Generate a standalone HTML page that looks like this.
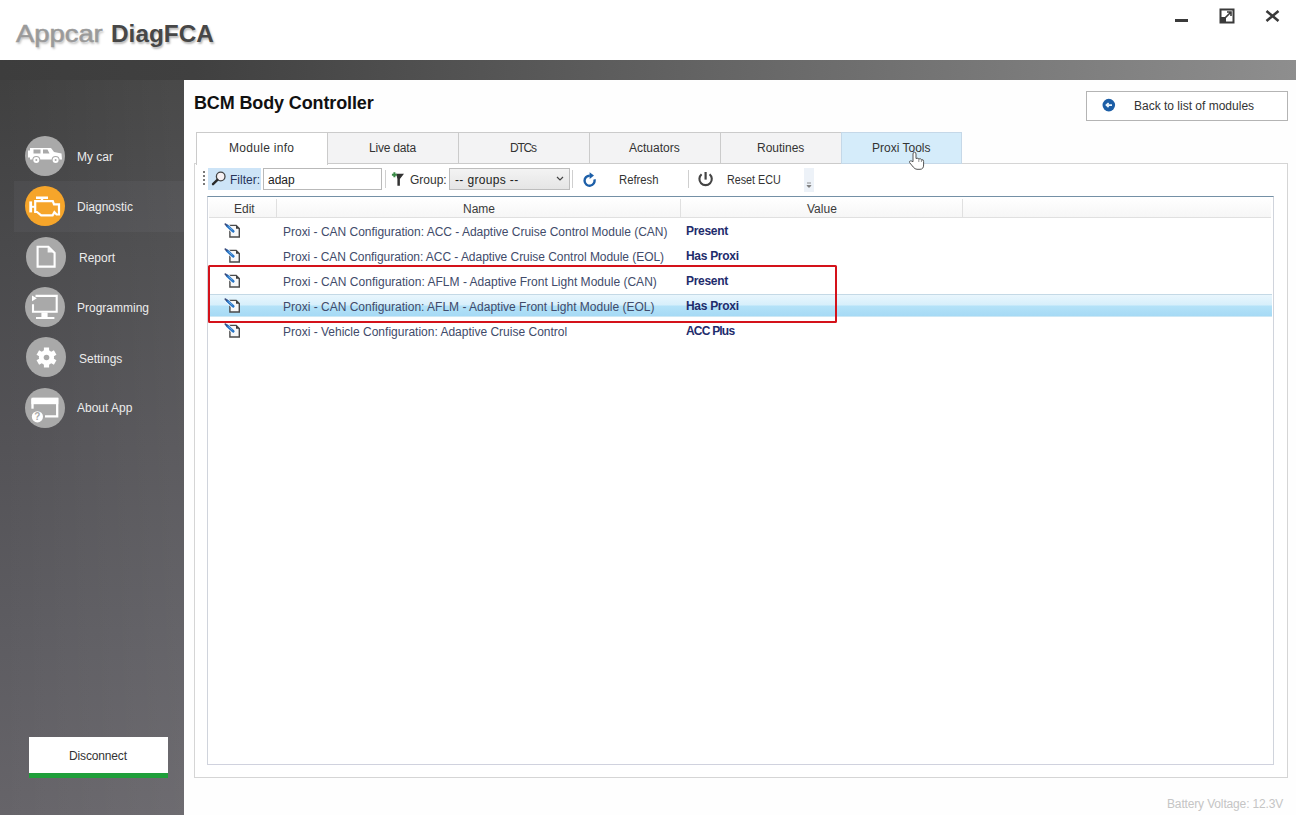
<!DOCTYPE html>
<html><head><meta charset="utf-8"><style>
*{margin:0;padding:0;box-sizing:border-box}
html,body{width:1296px;height:815px;overflow:hidden;background:#fff;font-family:"Liberation Sans",sans-serif}
.a{position:absolute}
.t{position:absolute;white-space:nowrap}
</style></head><body>
<div class="t" style="left:16px;top:20px;font-size:23px;line-height:28px;color:#9a9a9a;-webkit-text-stroke:0.5px #9a9a9a;transform:scaleX(1.19);transform-origin:0 0;text-shadow:1px 2px 2px rgba(0,0,0,.25)">Appcar</div>
<div class="t" style="left:111px;top:20px;font-size:23px;line-height:28px;font-weight:bold;color:#474747;transform:scaleX(1.06);transform-origin:0 0;text-shadow:1px 2px 2px rgba(0,0,0,.28)">DiagFCA</div>
<div class="a" style="left:1175px;top:19px;width:13px;height:3px;background:#3a3a3a"></div>
<svg class="a" style="left:1219px;top:8px" width="16" height="16" viewBox="0 0 16 16">
<rect x="1.5" y="1.5" width="13" height="13" fill="none" stroke="#3a3a3a" stroke-width="2"/>
<rect x="1" y="9" width="6" height="6" fill="#3a3a3a"/>
<path d="M6 10 L12 4 M8 4 H12 V8" fill="none" stroke="#3a3a3a" stroke-width="1.6"/></svg>
<svg class="a" style="left:1265px;top:10px" width="15" height="12" viewBox="0 0 15 12">
<path d="M1.5 1 L13.5 11 M13.5 1 L1.5 11" stroke="#3a3a3a" stroke-width="2.6"/></svg>
<div class="a" style="left:0;top:60px;width:1296px;height:20px;background:linear-gradient(90deg,#3d3d3d 0%,#404040 15%,#5c5c5c 46%,#8e8e8e 100%)"></div>
<div class="a" style="left:0;top:80px;width:184px;height:735px;background:linear-gradient(90deg,rgba(255,255,255,0) 0%,rgba(255,255,255,0.05) 100%),linear-gradient(180deg,#404040 0%,#49494b 22%,#545357 50%,#5d5c61 75%,#666469 100%)"></div>
<div class="a" style="left:184px;top:80px;width:1112px;height:735px;background:#fefefe"></div>
<div class="a" style="left:14px;top:181px;width:170px;height:51px;background:rgba(235,230,255,0.045)"></div>
<svg class="a" style="left:24px;top:135px" width="42" height="42" viewBox="0 0 42 42"><circle cx="21" cy="21" r="20" fill="#a9a9a9"/><path d="M6 13 H27 L30 17 L37.5 18.5 L38 24.5 H6 Z" fill="#fff"/>
<rect x="4" y="15.5" width="2.2" height="7" fill="#fff"/>
<path d="M9.5 14.5 H16.5 V18.5 H9.5 Z M19 14.5 H23.5 L25.5 18.5 H19 Z" fill="#a9a9a9"/>
<circle cx="12.3" cy="25" r="4" fill="#a9a9a9"/><circle cx="31.6" cy="25" r="4" fill="#a9a9a9"/>
<circle cx="12.3" cy="25" r="3" fill="#fff"/><circle cx="31.6" cy="25" r="3" fill="#fff"/>
<circle cx="12.3" cy="25" r="1" fill="#a9a9a9"/><circle cx="31.6" cy="25" r="1" fill="#a9a9a9"/></svg>
<div class="t" style="left:77px;top:150px;font-size:12px;line-height:14px;color:#ececec">My car</div>
<svg class="a" style="left:24px;top:185px" width="42" height="42" viewBox="0 0 42 42"><circle cx="21" cy="21" r="20" fill="#f6a52a"/><path d="M12 12.8 H24 M18 13 V16" fill="none" stroke="#fff" stroke-width="2.4"/>
<path d="M11.2 16.2 H28.8 L30 19.3 H35 V29.5 H32.6 L30.4 27.2 L28.6 30.4 H17.2 L13 27 H11.2 Z" fill="none" stroke="#fff" stroke-width="2.2" stroke-linejoin="miter"/>
<path d="M6.7 16.4 V27.4" stroke="#fff" stroke-width="2.8"/><path d="M7 21.8 H11" stroke="#fff" stroke-width="2"/></svg>
<div class="t" style="left:77px;top:200px;font-size:12px;line-height:14px;color:#ececec">Diagnostic</div>
<svg class="a" style="left:25px;top:236px" width="42" height="42" viewBox="0 0 42 42"><circle cx="21" cy="21" r="20" fill="#a9a9a9"/><path d="M12.6 10.8 H23.4 L29.6 17 V30.6 H12.6 Z" fill="none" stroke="#fff" stroke-width="2.1" stroke-linejoin="miter"/>
<path d="M22.6 11 L28.6 16.6 H22.6 Z" fill="#fff" opacity="0.9"/></svg>
<div class="t" style="left:79px;top:251px;font-size:12px;line-height:14px;color:#ececec">Report</div>
<svg class="a" style="left:24px;top:286px" width="42" height="42" viewBox="0 0 42 42"><circle cx="21" cy="21" r="20" fill="#a9a9a9"/><path d="M11.5 9.9 H32.7 V25.7 H9 V18.2" fill="none" stroke="#fff" stroke-width="2.1"/>
<path d="M8 9.4 L12.8 12.3 L8 15.2 Z" fill="#fff"/>
<rect x="17.4" y="26.5" width="6.2" height="4.6" fill="#fff"/><rect x="12" y="31" width="18.4" height="2" fill="#fff"/></svg>
<div class="t" style="left:77px;top:301px;font-size:12px;line-height:14px;color:#ececec">Programming</div>
<svg class="a" style="left:25px;top:336px" width="42" height="42" viewBox="0 0 42 42"><circle cx="21" cy="21" r="20" fill="#a9a9a9"/><g fill="#fff" transform="translate(21.5 21.5)"><circle r="7.6"/>
<rect x="-2.6" y="-10" width="5.2" height="20"/>
<rect x="-2.6" y="-10" width="5.2" height="20" transform="rotate(60)"/><rect x="-2.6" y="-10" width="5.2" height="20" transform="rotate(-60)"/>
</g><circle cx="21.5" cy="21.5" r="2.8" fill="#a9a9a9"/></svg>
<div class="t" style="left:79px;top:352px;font-size:12px;line-height:14px;color:#ececec">Settings</div>
<svg class="a" style="left:24px;top:387px" width="42" height="42" viewBox="0 0 42 42"><circle cx="21" cy="21" r="20" fill="#a9a9a9"/><path d="M8.5 12 H33.2 V29.3 H21" fill="none" stroke="#fff" stroke-width="2.3"/>
<rect x="7.4" y="10.8" width="26.9" height="6.4" fill="#fff"/>
<path d="M8.5 12 V21.7" stroke="#fff" stroke-width="2.3"/>
<circle cx="13.4" cy="29.8" r="5.6" fill="#fff"/>
<text x="13.4" y="33.4" font-size="10" font-weight="bold" text-anchor="middle" fill="#a9a9a9" font-family="Liberation Sans">?</text></svg>
<div class="t" style="left:77px;top:401px;font-size:12px;line-height:14px;color:#ececec">About App</div>
<div class="a" style="left:29px;top:737px;width:139px;height:37px;background:#fff"></div>
<div class="a" style="left:29px;top:773px;width:139px;height:5px;background:#1f9e3a"></div>
<div class="t" style="left:69px;top:749px;font-size:12px;line-height:14px;color:#333;letter-spacing:-0.15px">Disconnect</div>
<div class="t" style="left:194px;top:93px;font-size:18px;line-height:20px;color:#111;font-weight:700;letter-spacing:-0.13px">BCM Body Controller</div>
<div class="a" style="left:1086px;top:91px;width:202px;height:30px;border:1px solid #b4b4b4;background:#fff"></div>
<svg class="a" style="left:1102px;top:98px" width="14" height="14" viewBox="0 0 14 14"><circle cx="6.8" cy="7.1" r="6.3" fill="#1c5ea6"/><path d="M10 7.1 H4.6 M6.6 5 L4.4 7.1 L6.6 9.2" fill="none" stroke="#eaf4fc" stroke-width="1.7"/></svg>
<div class="t" style="left:1134px;top:99px;font-size:12px;line-height:14px;color:#333">Back to list of modules</div>
<div class="a" style="left:194px;top:163px;width:1094px;height:615px;border:1px solid #d5d5d5;background:#fff"></div>
<div class="a" style="left:196px;top:132px;width:132px;height:33px;border:1px solid #cbcbcb;border-bottom:none;background:#fff"></div>
<div class="t" style="left:229px;top:141px;font-size:12px;line-height:14px;color:#333;letter-spacing:0.3px">Module info</div>
<div class="a" style="left:327px;top:132px;width:132px;height:32px;border:1px solid #cbcbcb;background:#f3f3f4"></div>
<div class="t" style="left:369px;top:141px;font-size:12px;line-height:14px;color:#333;letter-spacing:-0.2px">Live data</div>
<div class="a" style="left:458px;top:132px;width:132px;height:32px;border:1px solid #cbcbcb;background:#f3f3f4"></div>
<div class="t" style="left:510px;top:141px;font-size:12px;line-height:14px;color:#333;letter-spacing:-1.2px">DTCs</div>
<div class="a" style="left:589px;top:132px;width:132px;height:32px;border:1px solid #cbcbcb;background:#f3f3f4"></div>
<div class="t" style="left:629px;top:141px;font-size:12px;line-height:14px;color:#333">Actuators</div>
<div class="a" style="left:720px;top:132px;width:122px;height:32px;border:1px solid #cbcbcb;background:#f3f3f4"></div>
<div class="t" style="left:757px;top:141px;font-size:12px;line-height:14px;color:#333">Routines</div>
<div class="a" style="left:841px;top:132px;width:121px;height:32px;border:1px solid #c5d8e8;background:#d5ecfa"></div>
<div class="t" style="left:872px;top:141px;font-size:12px;line-height:14px;color:#333">Proxi Tools</div>
<svg class="a" style="left:203px;top:171px" width="3" height="16"><g fill="#7a7a7a"><rect x="0" y="0" width="2" height="2"/><rect x="0" y="4" width="2" height="2"/><rect x="0" y="8" width="2" height="2"/><rect x="0" y="12" width="2" height="2"/></g></svg>
<div class="a" style="left:208px;top:168px;width:53px;height:22px;background:#cde4f7"></div>
<svg class="a" style="left:211px;top:171px" width="16" height="16" viewBox="0 0 16 16"><circle cx="9.7" cy="5.5" r="4.3" fill="#f7f1f3" stroke="#444" stroke-width="1.3"/><path d="M6.4 8.8 L2 13.2" stroke="#2a2a2a" stroke-width="2.4" stroke-linecap="round"/></svg>
<div class="t" style="left:230px;top:173px;font-size:12px;line-height:14px;color:#27345a">Filter:</div>
<div class="a" style="left:263px;top:168px;width:119px;height:22px;border:1px solid #b9b9b9;background:#fff"></div>
<div class="t" style="left:268px;top:173px;font-size:12px;line-height:14px;color:#222">adap</div>
<div class="a" style="left:385px;top:170px;width:1px;height:18px;background:#cfcfcf"></div>
<svg class="a" style="left:390px;top:171px" width="16" height="16" viewBox="0 0 16 16"><path d="M6.2 2.8 H14 L9.9 8 V14.8 H7.4 V8 Z" fill="#333"/><path d="M4.4 1.3 V6.3 M1.9 3.8 H6.9" stroke="#3a8a46" stroke-width="2"/></svg>
<div class="t" style="left:410px;top:173px;font-size:12px;line-height:14px;color:#333">Group:</div>
<div class="a" style="left:449px;top:168px;width:121px;height:22px;border:1px solid #bdbdbd;background:linear-gradient(#f3f3f3,#e5e5e5)"></div>
<div class="t" style="left:455px;top:173px;font-size:12px;line-height:14px;color:#222;letter-spacing:0.35px">-- groups --</div>
<svg class="a" style="left:556px;top:176px" width="8" height="6"><path d="M1 1 L4 4 L7 1" fill="none" stroke="#444" stroke-width="1.2"/></svg>
<div class="a" style="left:572px;top:170px;width:1px;height:18px;background:#cfcfcf"></div>
<svg class="a" style="left:582px;top:171px" width="16" height="16" viewBox="0 0 16 16"><path d="M12.4 8.4 A5 5 0 1 1 7.8 4.7" fill="none" stroke="#1d5fa8" stroke-width="2.4"/><path d="M7.6 1.2 L12 4.6 L7.6 8 Z" fill="#1d5fa8"/></svg>
<div class="t" style="left:619px;top:173px;font-size:12px;line-height:14px;color:#333;transform:scaleX(0.94);transform-origin:0 0">Refresh</div>
<div class="a" style="left:688px;top:170px;width:1px;height:18px;background:#cfcfcf"></div>
<svg class="a" style="left:698px;top:171px" width="16" height="16" viewBox="0 0 16 16"><path d="M3.6 3.2 A6.2 6.2 0 1 0 11.6 3.2" fill="none" stroke="#444" stroke-width="2.1"/><path d="M7.6 1 V8.6" stroke="#444" stroke-width="2.2"/></svg>
<div class="t" style="left:727px;top:173px;font-size:12px;line-height:14px;color:#333;transform:scaleX(0.895);transform-origin:0 0">Reset ECU</div>
<div class="a" style="left:804px;top:168px;width:10px;height:24px;background:#edf2f8"></div>
<svg class="a" style="left:805px;top:181px" width="8" height="8"><path d="M2 2 H6 M2 4.5 L4 6.5 L6 4.5 Z" fill="#777" stroke="#777" stroke-width="0.8"/></svg>
<div class="a" style="left:207px;top:196px;width:1067px;height:569px;border:1px solid #9fb6ca;border-color:#7490a6 #d0d4dc #d0d2de #d0d4dc;background:#fff"></div>
<div class="a" style="left:209px;top:198px;width:1062px;height:19px;background:linear-gradient(#fff,#f6f6f6)"></div>
<div class="a" style="left:209px;top:217px;width:1062px;height:1px;background:#e0e0e0"></div>
<div class="a" style="left:276px;top:199px;width:1px;height:18px;background:#e0e0e0"></div>
<div class="a" style="left:680px;top:199px;width:1px;height:18px;background:#e0e0e0"></div>
<div class="a" style="left:962px;top:199px;width:1px;height:18px;background:#e0e0e0"></div>
<div class="t" style="left:234px;top:202px;font-size:12px;line-height:14px;color:#3a3a3a">Edit</div>
<div class="t" style="left:463px;top:202px;font-size:12px;line-height:14px;color:#3a3a3a">Name</div>
<div class="t" style="left:807px;top:202px;font-size:12px;line-height:14px;color:#3a3a3a">Value</div>
<div class="a" style="left:209px;top:294px;width:1063px;height:23px;background:linear-gradient(180deg,#c4d9e6 0px,#c4d9e6 1px,#e9f6fd 1px,#d7effb 11px,#b4e2f8 12px,#a6daf5 22px,#cde8f5 22px)"></div>
<svg class="a" style="left:223px;top:223px" width="18" height="16" viewBox="0 0 18 16"><path d="M6.9 2.4 H13.2 L16.3 5.5 V14 H6.9 Z" fill="#f7f7f7" stroke="#4a4a4a" stroke-width="1.4"/><path d="M13 2.4 L16.3 5.7 H13 Z" fill="#3a3a3a"/><path d="M4.4 3 L10.4 8.4" stroke="#fff" stroke-width="4.2" stroke-linecap="round"/><path d="M4.2 2.8 L10.2 8.2" stroke="#2673c4" stroke-width="2.8" stroke-linecap="round"/><path d="M5.6 3.6 L9.4 7" stroke="#7fb8ec" stroke-width="0.9"/><path d="M2.4 1.2 L3.6 2.3" stroke="#3a4a7a" stroke-width="1.8" stroke-linecap="round"/></svg>
<div class="t" style="left:283px;top:225px;font-size:12px;line-height:14px;color:#414b6a;letter-spacing:-0.015px">Proxi - CAN Configuration: ACC - Adaptive Cruise Control Module (CAN)</div>
<div class="t" style="left:686px;top:224px;font-size:12px;line-height:14px;color:#1e2c6c;font-weight:700;letter-spacing:-0.3px">Present</div>
<svg class="a" style="left:223px;top:248px" width="18" height="16" viewBox="0 0 18 16"><path d="M6.9 2.4 H13.2 L16.3 5.5 V14 H6.9 Z" fill="#f7f7f7" stroke="#4a4a4a" stroke-width="1.4"/><path d="M13 2.4 L16.3 5.7 H13 Z" fill="#3a3a3a"/><path d="M4.4 3 L10.4 8.4" stroke="#fff" stroke-width="4.2" stroke-linecap="round"/><path d="M4.2 2.8 L10.2 8.2" stroke="#2673c4" stroke-width="2.8" stroke-linecap="round"/><path d="M5.6 3.6 L9.4 7" stroke="#7fb8ec" stroke-width="0.9"/><path d="M2.4 1.2 L3.6 2.3" stroke="#3a4a7a" stroke-width="1.8" stroke-linecap="round"/></svg>
<div class="t" style="left:283px;top:250px;font-size:12px;line-height:14px;color:#414b6a;letter-spacing:-0.045px">Proxi - CAN Configuration: ACC - Adaptive Cruise Control Module (EOL)</div>
<div class="t" style="left:686px;top:249px;font-size:12px;line-height:14px;color:#1e2c6c;font-weight:700;letter-spacing:-0.3px">Has Proxi</div>
<svg class="a" style="left:223px;top:273px" width="18" height="16" viewBox="0 0 18 16"><path d="M6.9 2.4 H13.2 L16.3 5.5 V14 H6.9 Z" fill="#f7f7f7" stroke="#4a4a4a" stroke-width="1.4"/><path d="M13 2.4 L16.3 5.7 H13 Z" fill="#3a3a3a"/><path d="M4.4 3 L10.4 8.4" stroke="#fff" stroke-width="4.2" stroke-linecap="round"/><path d="M4.2 2.8 L10.2 8.2" stroke="#2673c4" stroke-width="2.8" stroke-linecap="round"/><path d="M5.6 3.6 L9.4 7" stroke="#7fb8ec" stroke-width="0.9"/><path d="M2.4 1.2 L3.6 2.3" stroke="#3a4a7a" stroke-width="1.8" stroke-linecap="round"/></svg>
<div class="t" style="left:283px;top:275px;font-size:12px;line-height:14px;color:#414b6a;letter-spacing:0.015px">Proxi - CAN Configuration: AFLM - Adaptive Front Light Module (CAN)</div>
<div class="t" style="left:686px;top:274px;font-size:12px;line-height:14px;color:#1e2c6c;font-weight:700;letter-spacing:-0.3px">Present</div>
<svg class="a" style="left:223px;top:298px" width="18" height="16" viewBox="0 0 18 16"><path d="M6.9 2.4 H13.2 L16.3 5.5 V14 H6.9 Z" fill="#f7f7f7" stroke="#4a4a4a" stroke-width="1.4"/><path d="M13 2.4 L16.3 5.7 H13 Z" fill="#3a3a3a"/><path d="M4.4 3 L10.4 8.4" stroke="#fff" stroke-width="4.2" stroke-linecap="round"/><path d="M4.2 2.8 L10.2 8.2" stroke="#2673c4" stroke-width="2.8" stroke-linecap="round"/><path d="M5.6 3.6 L9.4 7" stroke="#7fb8ec" stroke-width="0.9"/><path d="M2.4 1.2 L3.6 2.3" stroke="#3a4a7a" stroke-width="1.8" stroke-linecap="round"/></svg>
<div class="t" style="left:283px;top:300px;font-size:12px;line-height:14px;color:#414b6a">Proxi - CAN Configuration: AFLM - Adaptive Front Light Module (EOL)</div>
<div class="t" style="left:686px;top:299px;font-size:12px;line-height:14px;color:#1e2c6c;font-weight:700;letter-spacing:-0.3px">Has Proxi</div>
<svg class="a" style="left:223px;top:323px" width="18" height="16" viewBox="0 0 18 16"><path d="M6.9 2.4 H13.2 L16.3 5.5 V14 H6.9 Z" fill="#f7f7f7" stroke="#4a4a4a" stroke-width="1.4"/><path d="M13 2.4 L16.3 5.7 H13 Z" fill="#3a3a3a"/><path d="M4.4 3 L10.4 8.4" stroke="#fff" stroke-width="4.2" stroke-linecap="round"/><path d="M4.2 2.8 L10.2 8.2" stroke="#2673c4" stroke-width="2.8" stroke-linecap="round"/><path d="M5.6 3.6 L9.4 7" stroke="#7fb8ec" stroke-width="0.9"/><path d="M2.4 1.2 L3.6 2.3" stroke="#3a4a7a" stroke-width="1.8" stroke-linecap="round"/></svg>
<div class="t" style="left:283px;top:325px;font-size:12px;line-height:14px;color:#414b6a">Proxi - Vehicle Configuration: Adaptive Cruise Control</div>
<div class="t" style="left:686px;top:324px;font-size:12px;line-height:14px;color:#1e2c6c;font-weight:700;letter-spacing:-0.8px">ACC Plus</div>
<div class="a" style="left:208px;top:265px;width:629px;height:58px;border:2.5px solid #d4121a;border-radius:1.5px"></div>
<div class="t" style="left:1167px;top:797px;font-size:12px;line-height:14px;color:#c5c5c5;letter-spacing:-0.15px">Battery Voltage: 12.3V</div>
<svg class="a" style="left:908px;top:151px" width="18" height="20" viewBox="0 0 18 20"><path d="M5 10.5 V3 Q5 1.2 6.5 1.2 Q8 1.2 8 3 V7.5 Q10.5 6.5 10.8 8 Q13 7 13.4 8.8 Q15.6 8 15.6 10.5 V14 Q15.6 18.3 12 18.3 H9 Q7 18.3 5.2 16 L1.6 11.6 Q1 10.1 2.5 9.9 Q3.8 9.8 5 10.8 Z" fill="#fff" stroke="#555" stroke-width="1"/><path d="M10.8 8 V11 M13.4 8.8 V11" stroke="#777" stroke-width="0.8"/></svg>
</body></html>
